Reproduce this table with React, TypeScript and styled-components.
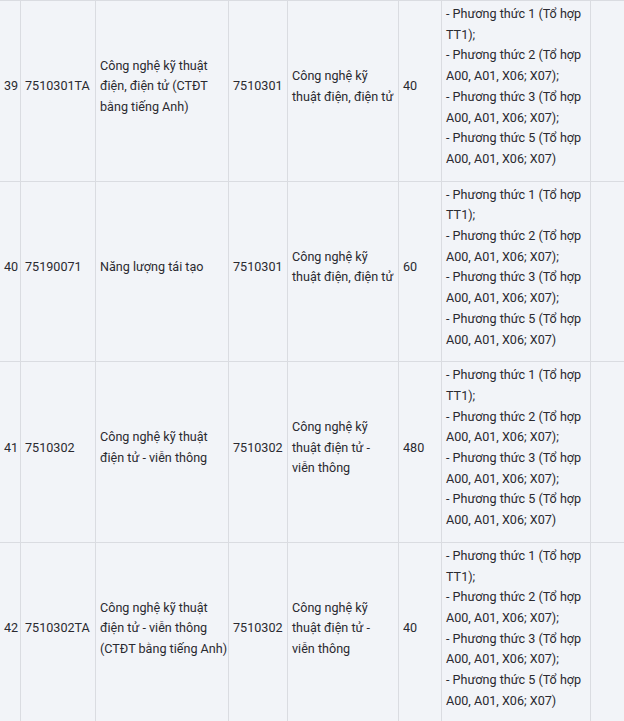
import styled, { createGlobalStyle } from "styled-components";

type Row = {
  stt: number;
  code: string;
  name: string[];
  groupCode: string;
  group: string[];
  quota: number;
};

const methods = [
  "- Phương thức 1 (Tổ hợp",
  "TT1);",
  "- Phương thức 2 (Tổ hợp",
  "A00, A01, X06; X07);",
  "- Phương thức 3 (Tổ hợp",
  "A00, A01, X06; X07);",
  "- Phương thức 5 (Tổ hợp",
  "A00, A01, X06; X07)",
];

const rows: Row[] = [
  {
    stt: 39,
    code: "7510301TA",
    name: ["Công nghệ kỹ thuật", "điện, điện tử (CTĐT", "bằng tiếng Anh)"],
    groupCode: "7510301",
    group: ["Công nghệ kỹ", "thuật điện, điện tử"],
    quota: 40,
  },
  {
    stt: 40,
    code: "75190071",
    name: ["Năng lượng tái tạo"],
    groupCode: "7510301",
    group: ["Công nghệ kỹ", "thuật điện, điện tử"],
    quota: 60,
  },
  {
    stt: 41,
    code: "7510302",
    name: ["Công nghệ kỹ thuật", "điện tử - viễn thông"],
    groupCode: "7510302",
    group: ["Công nghệ kỹ", "thuật điện tử -", "viễn thông"],
    quota: 480,
  },
  {
    stt: 42,
    code: "7510302TA",
    name: ["Công nghệ kỹ thuật", "điện tử - viễn thông", "(CTĐT bằng tiếng Anh)"],
    groupCode: "7510302",
    group: ["Công nghệ kỹ", "thuật điện tử -", "viễn thông"],
    quota: 40,
  },
];

const widths = [21, 75, 133, 59, 111, 43, 149, 60];

export default function App() {
  return (
    <>
      <GlobalStyle />
      <Viewport>
        <Table>
          <colgroup>
            {widths.map((w, i) => (
              <col key={i} style={{ width: w }} />
            ))}
          </colgroup>
          <tbody>
            {rows.map((r) => (
              <tr key={r.stt}>
                <Cell>{r.stt}</Cell>
                <Cell>{r.code}</Cell>
                <Cell>
                  {r.name.map((l, i) => (
                    <Line key={i}>{l}</Line>
                  ))}
                </Cell>
                <Cell>{r.groupCode}</Cell>
                <Cell>
                  {r.group.map((l, i) => (
                    <Line key={i}>{l}</Line>
                  ))}
                </Cell>
                <Cell>{r.quota}</Cell>
                <Cell>
                  {methods.map((m, i) => (
                    <Line key={i}>{m}</Line>
                  ))}
                </Cell>
                <Cell />
              </tr>
            ))}
          </tbody>
        </Table>
      </Viewport>
    </>
  );
}

const GlobalStyle = createGlobalStyle`
  html, body {
    margin: 0;
    padding: 0;
    background: #f2f4f8;
  }
`;

const Viewport = styled.div`
  width: 624px;
  height: 721px;
  overflow: hidden;
  background: #f2f4f8;
`;

const Table = styled.table`
  table-layout: fixed;
  border-collapse: collapse;
  width: 651px;
  margin-left: -1px;
  font-family: Roboto, "Noto Sans", sans-serif;
  font-size: 12.6px;
  line-height: 20.7px;
  color: #2a2a30;
`;

const Cell = styled.td`
  border: 1px solid #dadce1;
  padding: 3px 2px 11px 4px;
  vertical-align: middle;
  height: 165px;
  overflow: hidden;
`;

const Line = styled.div`
  white-space: nowrap;
`;
